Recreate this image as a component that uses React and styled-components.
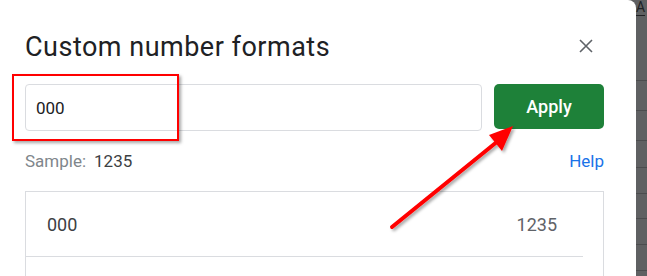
import React from 'react';
import styled, { createGlobalStyle } from 'styled-components';

const GlobalStyle = createGlobalStyle`
    html, body {
        margin: 0;
        padding: 0;
        background: #5f6062;
        font-family: Roboto, "Liberation Sans", Arial, sans-serif;
    }
`

const Screen = styled.div`
    position: relative;
    display: flex;
    width: 647px;
    height: 276px;
    overflow: hidden;
`

const Dialog = styled.div`
    width: 636px;
    flex-shrink: 0;
    background: #FFFFFF;
    border-top-right-radius: 8px;
    box-sizing: border-box;
    padding: 31px 32px 0 25px;
    display: flex;
    flex-direction: column;
`

const Header = styled.div`
    display: flex;
    align-items: center;
    justify-content: space-between;
    height: 32px;
`

const Title = styled.h1`
    margin: 0;
    font-size: 27px;
    letter-spacing: 0.5px;
    line-height: 32px;
    font-weight: 400;
    color: #202124;
`

const CloseButton = styled.button`
    width: 24px;
    height: 24px;
    margin: -2px 6px 0 0;
    padding: 0;
    border: none;
    background: none;
    display: flex;
    align-items: center;
    justify-content: center;
    color: #5f6368;
`

const FormRow = styled.div`
    display: flex;
    align-items: flex-start;
    gap: 12px;
    margin-top: 21px;
`

const Input = styled.input`
    width: 457px;
    height: 47px;
    box-sizing: border-box;
    border: 1px solid #dadce0;
    border-radius: 4px;
    padding: 0 10px;
    font-family: Roboto, sans-serif;
    font-size: 17px;
    color: #202124;
    outline: none;
`

const ApplyButton = styled.button`
    width: 110px;
    height: 45px;
    border: none;
    border-radius: 5px;
    background: #1e8139;
    color: #FFFFFF;
    font-family: Roboto, sans-serif;
    font-size: 18px;
    font-weight: 500;
`

const SampleRow = styled.div`
    display: flex;
    justify-content: space-between;
    margin-top: 20px;
    font-size: 17px;
    line-height: 20px;
`

const SampleLabel = styled.span`
    color: #80868b;
    span{
        color: #3c4043;
        margin-left: 8px;
    }
`

const HelpLink = styled.a`
    color: #1a73e8;
    text-decoration: none;
`

const FormatList = styled.div`
    margin-top: 20px;
    border: 1px solid #dadce0;
    border-bottom: none;
    padding-right: 20px;
    flex-grow: 1;
`

const FormatItem = styled.div`
    display: flex;
    justify-content: space-between;
    align-items: center;
    height: 64px;
    padding: 0 26px 0 21px;
    border-bottom: 1px solid #dadce0;
    font-size: 18px;
`

const Pattern = styled.span`
    color: #3c4043;
`

const Preview = styled.span`
    color: #5f6368;
`

const Sheet = styled.div`
    flex-grow: 1;
    position: relative;
    background: #5f6062;
    background-image: ${props => props.lines.map(() => `linear-gradient(#4b4c4e, #4b4c4e)`).join(', ')};
    background-size: 100% 1px;
    background-repeat: no-repeat;
    background-position: ${props => props.lines.map(y => `0 ${y}px`).join(', ')};
`

const ToolGlyph = styled.span`
    position: absolute;
    left: 0;
    top: 0;
    font-size: 14px;
    line-height: 15px;
    color: #202124;
    border-bottom: 1.5px solid #202124;
`

const Highlight = styled.div`
    position: absolute;
    left: 12px;
    top: 74px;
    width: 167px;
    height: 67px;
    box-sizing: border-box;
    border: 2.5px solid #ff0000;
    box-shadow: 2px 2px 3px rgba(0, 0, 0, 0.35);
    pointer-events: none;
`

const Annotation = styled.svg`
    position: absolute;
    left: 0;
    top: 0;
    pointer-events: none;
`

// the second row is cut off by the bottom of the screenshot
const formats = [
    { pattern: '000', preview: '1235' },
    { pattern: '', preview: '' },
]

function App() {
    return (
        <>
            <GlobalStyle />
            <Screen>
                <Dialog>
                    <Header>
                        <Title>Custom number formats</Title>
                        <CloseButton aria-label="Close">
                            <svg width="14" height="14" viewBox="0 0 14 14">
                                <path d="M1 1L13 13M13 1L1 13" stroke="currentColor" strokeWidth="1.6" />
                            </svg>
                        </CloseButton>
                    </Header>
                    <FormRow>
                        <Input defaultValue="000" />
                        <ApplyButton>Apply</ApplyButton>
                    </FormRow>
                    <SampleRow>
                        <SampleLabel>Sample:<span>1235</span></SampleLabel>
                        <HelpLink href="#">Help</HelpLink>
                    </SampleRow>
                    <FormatList>
                        {formats.map((f, i) => (
                            <FormatItem key={i}>
                                <Pattern>{f.pattern}</Pattern>
                                <Preview>{f.preview}</Preview>
                            </FormatItem>
                        ))}
                    </FormatList>
                </Dialog>
                <Sheet lines={[80, 110, 140, 167, 193, 218, 244, 270]}>
                    <ToolGlyph>A</ToolGlyph>
                </Sheet>

                <Highlight />
                <Annotation width="647" height="276">
                    <defs>
                        <filter id="drop" x="-20%" y="-20%" width="140%" height="140%">
                            <feDropShadow dx="2" dy="2" stdDeviation="1.5" floodColor="#000" floodOpacity="0.35" />
                        </filter>
                    </defs>
                    <g filter="url(#drop)" fill="#ff0000">
                        <path d="M392 227L498 141" stroke="#ff0000" strokeWidth="4" strokeLinecap="round" />
                        <path d="M513 126L489 135L502 151Z" />
                    </g>
                </Annotation>
            </Screen>
        </>
    )
}

export default App
